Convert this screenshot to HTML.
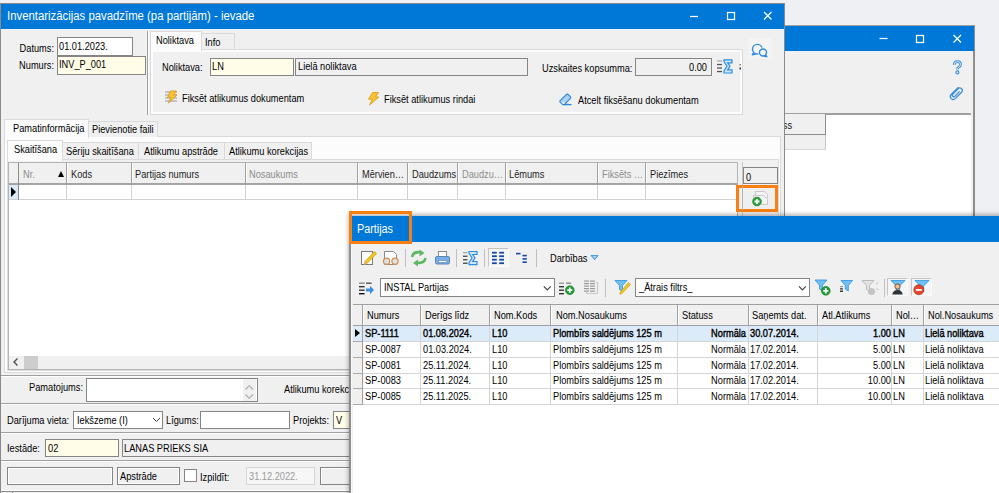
<!DOCTYPE html>
<html><head><meta charset="utf-8">
<style>
*{box-sizing:border-box;margin:0;padding:0}
html,body{width:999px;height:493px;overflow:hidden;background:#eef0f4;font-family:"Liberation Sans",sans-serif;font-size:11px;color:#000}
.a{position:absolute}
.t{position:absolute;white-space:nowrap;font-size:11px;line-height:13px;transform:scaleX(.84);transform-origin:0 0;color:#000}
.tr{position:absolute;white-space:nowrap;font-size:11px;line-height:13px;transform:scaleX(.84);transform-origin:100% 0;text-align:right;color:#000}
.blue{background:#0078d7}
.ttl{position:absolute;white-space:nowrap;color:#fff;font-size:12px;line-height:14px;transform-origin:0 0}
.inp{position:absolute;background:#fff;border:1px solid #858585}
.inpy{background:#fffde8}
.g{position:absolute;background:#a0a0a0}
</style></head><body>

<!-- back window -->
<div class="a" style="left:700px;top:25px;width:275px;height:470px;background:#f0f0f0;border-top:1px solid #a8a09a;border-right:2px solid #8e8e8e"></div>
<div class="a blue" style="left:700px;top:26px;width:274px;height:25px"></div>
<div class="a" style="left:700px;top:113px;width:271px;height:2px;background:#a0a0a0"></div>
<div class="a" style="left:700px;top:115px;width:271px;height:380px;background:#fff"></div>
<div class="a" style="left:701px;top:114px;width:125px;height:21px;background:#f0f0f0;border-right:1px solid #8c8c8c;border-bottom:1px solid #8c8c8c"></div>
<div class="tr" style="left:700px;width:92px;top:119px;color:#111">ss</div>
<div class="a" style="left:701px;top:135px;width:125px;height:15px;background:#f0f0f0;border-right:1px solid #c8c8c8;border-bottom:1px solid #d8d8d8"></div>
<!-- main window -->
<div id="mw" class="a" style="left:0;top:3px;width:785px;height:490px;background:#f0f0f0;border:1px solid #8a8a8a;border-bottom:none"></div>
<div class="a blue" style="left:1px;top:4px;width:783px;height:25px"></div>
<div class="ttl" style="left:7px;top:9px;transform:scaleX(.946)">Inventarizācijas pavadzīme (pa partijām) - ievade</div>


<!-- main content: header -->
<div class="tr" style="left:0;width:54px;top:42px">Datums:</div>
<div class="tr" style="left:0;width:54px;top:59px">Numurs:</div>
<div class="inp" style="left:57px;top:37px;width:76px;height:19px"></div>
<div class="t" style="left:59px;top:40px">01.01.2023.</div>
<div class="inp inpy" style="left:57px;top:56px;width:89px;height:19px"></div>
<div class="t" style="left:59px;top:58px">INV_P_001</div>
<div class="a" style="left:147px;top:31px;width:1px;height:84px;background:#a0a0a0"></div>
<div class="a" style="left:148px;top:31px;width:1px;height:84px;background:#fff"></div>

<!-- noliktava tabs -->
<div class="a" style="left:150px;top:49px;width:593px;height:66px;background:#fcfcfc;border:1px solid #dadada"></div>
<div class="a" style="left:153px;top:52px;width:587px;height:60px;background:#f0f0f0"></div>
<div class="a" style="left:150px;top:31px;width:52px;height:20px;background:#fcfcfc;border:1px solid #dadada;border-bottom:none"></div>
<div class="a" style="left:201px;top:33px;width:34px;height:16px;background:#f0f0f0;border:1px solid #dadada;border-bottom:none"></div>
<div class="t" style="left:156px;top:34px">Noliktava</div>
<div class="t" style="left:205px;top:36px">Info</div>
<div class="t" style="left:162px;top:61px">Noliktava:</div>
<div class="inp inpy" style="left:210px;top:58px;width:84px;height:18px"></div>
<div class="t" style="left:212px;top:60px">LN</div>
<div class="inp" style="left:295px;top:58px;width:233px;height:18px;background:#f0f0f0"></div>
<div class="t" style="left:298px;top:60px">Lielā noliktava</div>
<div class="t" style="left:542px;top:62px">Uzskaites kopsumma:</div>
<div class="inp" style="left:635px;top:58px;width:77px;height:18px;background:#f0f0f0"></div>
<div class="tr" style="left:640px;width:67px;top:61px">0.00</div>
<div class="t" style="left:182px;top:92px">Fiksēt atlikumus dokumentam</div>
<div class="t" style="left:384px;top:93px">Fiksēt atlikumus rindai</div>
<div class="t" style="left:578px;top:94px">Atcelt fiksēšanu dokumentam</div>

<!-- pamatinformacija tabs -->
<div class="a" style="left:4px;top:136px;width:777px;height:237px;background:#fcfcfc;border:1px solid #dadada"></div>
<div class="a" style="left:4px;top:119px;width:85px;height:19px;background:#fcfcfc;border:1px solid #dadada;border-bottom:none"></div>
<div class="a" style="left:88px;top:121px;width:70px;height:16px;background:#f0f0f0;border:1px solid #dadada;border-bottom:none"></div>
<div class="t" style="left:13px;top:122px">Pamatinformācija</div>
<div class="t" style="left:92px;top:123px">Pievienotie faili</div>
<div class="a" style="left:7px;top:159px;width:772px;height:212px;background:#fcfcfc;border:1px solid #dadada"></div>
<div class="a" style="left:8px;top:160px;width:770px;height:210px;background:#f0f0f0"></div>
<div class="a" style="left:7px;top:140px;width:56px;height:21px;background:#fcfcfc;border:1px solid #dadada;border-bottom:none"></div>
<div class="a" style="left:62px;top:142px;width:77px;height:17px;background:#f0f0f0;border:1px solid #dadada;border-bottom:none"></div>
<div class="a" style="left:138px;top:142px;width:87px;height:17px;background:#f0f0f0;border:1px solid #dadada;border-bottom:none"></div>
<div class="a" style="left:224px;top:142px;width:88px;height:17px;background:#f0f0f0;border:1px solid #dadada;border-bottom:none"></div>
<div class="t" style="left:14px;top:143px">Skaitīšana</div>
<div class="t" style="left:66px;top:145px">Sēriju skaitīšana</div>
<div class="t" style="left:144px;top:145px">Atlikumu apstrāde</div>
<div class="t" style="left:229px;top:145px">Atlikumu korekcijas</div>

<!-- grid -->
<div class="a" style="left:8px;top:162px;width:730px;height:208px;background:#fff;border:1px solid #b4b4b4"></div>
<div class="a" style="left:9px;top:163px;width:728px;height:20px;background:#f0f0f0"></div>
<div class="a" style="left:9px;top:183px;width:728px;height:2px;background:#a4a4a4"></div>
<div class="a" style="left:9px;top:199px;width:728px;height:1px;background:#d2d2d2"></div>
<div class="a" style="left:9px;top:185px;width:9px;height:14px;background:#d9ebf9"></div>
<div class="a" style="left:18px;top:163px;width:1px;height:37px;background:#8c8c8c"></div>
<div class="a" style="left:66px;top:163px;width:1px;height:20px;background:#a0a0a0"></div><div class="a" style="left:67px;top:163px;width:1px;height:20px;background:#fff"></div><div class="a" style="left:66px;top:185px;width:1px;height:14px;background:#d2d2d2"></div>
<div class="a" style="left:131px;top:163px;width:1px;height:20px;background:#a0a0a0"></div><div class="a" style="left:132px;top:163px;width:1px;height:20px;background:#fff"></div><div class="a" style="left:131px;top:185px;width:1px;height:14px;background:#d2d2d2"></div>
<div class="a" style="left:245px;top:163px;width:1px;height:20px;background:#a0a0a0"></div><div class="a" style="left:246px;top:163px;width:1px;height:20px;background:#fff"></div><div class="a" style="left:245px;top:185px;width:1px;height:14px;background:#d2d2d2"></div>
<div class="a" style="left:357px;top:163px;width:1px;height:20px;background:#a0a0a0"></div><div class="a" style="left:358px;top:163px;width:1px;height:20px;background:#fff"></div><div class="a" style="left:357px;top:185px;width:1px;height:14px;background:#d2d2d2"></div>
<div class="a" style="left:407px;top:163px;width:1px;height:20px;background:#a0a0a0"></div><div class="a" style="left:408px;top:163px;width:1px;height:20px;background:#fff"></div><div class="a" style="left:407px;top:185px;width:1px;height:14px;background:#d2d2d2"></div>
<div class="a" style="left:457px;top:163px;width:1px;height:20px;background:#a0a0a0"></div><div class="a" style="left:458px;top:163px;width:1px;height:20px;background:#fff"></div><div class="a" style="left:457px;top:185px;width:1px;height:14px;background:#d2d2d2"></div>
<div class="a" style="left:505px;top:163px;width:1px;height:20px;background:#a0a0a0"></div><div class="a" style="left:506px;top:163px;width:1px;height:20px;background:#fff"></div><div class="a" style="left:505px;top:185px;width:1px;height:14px;background:#d2d2d2"></div>
<div class="a" style="left:597px;top:163px;width:1px;height:20px;background:#a0a0a0"></div><div class="a" style="left:598px;top:163px;width:1px;height:20px;background:#fff"></div><div class="a" style="left:597px;top:185px;width:1px;height:14px;background:#d2d2d2"></div>
<div class="a" style="left:645px;top:163px;width:1px;height:20px;background:#a0a0a0"></div><div class="a" style="left:646px;top:163px;width:1px;height:20px;background:#fff"></div><div class="a" style="left:645px;top:185px;width:1px;height:14px;background:#d2d2d2"></div>
<div class="t" style="left:23px;top:168px;color:#8d8d8d">Nr.</div>
<div class="t" style="left:71px;top:168px;color:#1e1e1e">Kods</div>
<div class="t" style="left:135px;top:168px;color:#1e1e1e">Partijas numurs</div>
<div class="t" style="left:249px;top:168px;color:#8d8d8d">Nosaukums</div>
<div class="t" style="left:362px;top:168px;color:#1e1e1e">Mērvien…</div>
<div class="t" style="left:412px;top:168px;color:#1e1e1e">Daudzums</div>
<div class="t" style="left:462px;top:168px;color:#8d8d8d">Daudzu…</div>
<div class="t" style="left:509px;top:168px;color:#1e1e1e">Lēmums</div>
<div class="t" style="left:602px;top:168px;color:#8d8d8d">Fiksēts …</div>
<div class="t" style="left:650px;top:168px;color:#1e1e1e">Piezīmes</div>

<div class="a" style="left:57.8px;top:171px;width:0;height:0;border-left:3.3px solid transparent;border-right:3.3px solid transparent;border-bottom:6px solid #000"></div>
<div class="a" style="left:11px;top:187px;width:0;height:0;border-top:5px solid transparent;border-bottom:5px solid transparent;border-left:5px solid #000"></div>
<div class="a" style="left:9px;top:356px;width:728px;height:13px;background:#f0f0f0"></div>
<div class="a" style="left:24px;top:356px;width:14px;height:13px;background:#cdcdcd"></div>
<svg class="a" style="left:12px;top:357px" width="8" height="10"><path d="M5.5 1.5 L2 5 L5.5 8.5" fill="none" stroke="#505050" stroke-width="1.4"/></svg>
<div class="a" style="left:742px;top:162px;width:1px;height:208px;background:#c8c8c8"></div>
<div class="inp" style="left:743px;top:167px;width:35px;height:17px;background:#f0f0f0"></div>
<div class="t" style="left:746px;top:171px">0</div>
<div class="a" style="left:736px;top:185px;width:42px;height:27px;border:3px solid #fa7f12"></div>

<!-- lower form -->
<div class="a" style="left:1px;top:375px;width:783px;height:1px;background:#a0a0a0"></div>
<div class="a" style="left:1px;top:376px;width:783px;height:1px;background:#fff"></div>
<div class="tr" style="left:0;width:83px;top:381px">Pamatojums:</div>
<div class="inp" style="left:86px;top:378px;width:172px;height:24px"></div>
<div class="t" style="left:284px;top:383px">Atlikumu korekcijas:</div>
<div class="a" style="left:1px;top:403px;width:783px;height:1px;background:#a0a0a0"></div>
<div class="a" style="left:1px;top:404px;width:783px;height:1px;background:#fff"></div>
<div class="t" style="left:7px;top:414px">Darījuma vieta:</div>
<div class="inp" style="left:73px;top:411px;width:90px;height:18px"></div>
<div class="t" style="left:77px;top:414px">Iekšzeme (I)</div>
<div class="t" style="left:166px;top:414px">Līgums:</div>
<div class="inp" style="left:200px;top:411px;width:90px;height:18px"></div>
<div class="t" style="left:293px;top:414px">Projekts:</div>
<div class="inp inpy" style="left:333px;top:411px;width:40px;height:18px"></div>
<div class="t" style="left:336px;top:414px">V</div>
<div class="a" style="left:1px;top:432px;width:783px;height:1px;background:#a0a0a0"></div>
<div class="a" style="left:1px;top:433px;width:783px;height:1px;background:#fff"></div>
<div class="t" style="left:7px;top:442px">Iestāde:</div>
<div class="inp inpy" style="left:45px;top:439px;width:74px;height:18px"></div>
<div class="t" style="left:48px;top:442px">02</div>
<div class="inp" style="left:122px;top:439px;width:300px;height:18px;background:#f0f0f0"></div>
<div class="t" style="left:124px;top:442px">LANAS PRIEKS SIA</div>
<div class="a" style="left:1px;top:460px;width:783px;height:1px;background:#a0a0a0"></div>
<div class="a" style="left:1px;top:461px;width:783px;height:1px;background:#fff"></div>
<div class="inp" style="left:7px;top:467px;width:106px;height:18px;background:#f0f0f0;box-shadow:inset 1px 1px 0 #fff,inset -1px -1px 0 #fff"></div>
<div class="inp" style="left:117px;top:467px;width:63px;height:18px;background:#f0f0f0;box-shadow:inset 1px 1px 0 #fff,inset -1px -1px 0 #fff"></div>
<div class="t" style="left:120px;top:470px">Apstrāde</div>
<div class="inp" style="left:184px;top:469px;width:13px;height:13px"></div>
<div class="t" style="left:200px;top:471px">Izpildīt:</div>
<div class="a" style="left:246px;top:467px;width:69px;height:18px;background:#f7f7f7;border:1px solid #d5d5d5"></div>
<div class="t" style="left:249px;top:470px;color:#9a9a9a">31.12.2022.</div>
<div class="inp" style="left:320px;top:467px;width:60px;height:18px;background:#f0f0f0;box-shadow:inset 1px 1px 0 #fff"></div>
<div class="a" style="left:1px;top:490px;width:783px;height:1px;background:#fff"></div><div class="a" style="left:1px;top:491px;width:783px;height:1px;background:#8a8a8a"></div><div class="a" style="left:12px;top:491px;width:1px;height:2px;background:#8a8a8a"></div>


<svg class="a" style="left:0;top:0" width="999" height="493" viewBox="0 0 999 493">
<!-- main title buttons -->
<g stroke="#fff" stroke-width="1.25" fill="none">
<line x1="690" y1="16.5" x2="698" y2="16.5"/>
<rect x="727.5" y="12.5" width="7" height="7"/>
<path d="M764 12 L771.5 19.5 M771.5 12 L764 19.5"/>
<line x1="879.5" y1="38.5" x2="887.5" y2="38.5"/>
<rect x="916.5" y="35.5" width="7" height="7"/>
<path d="M953.5 35 L961 42.5 M961 35 L953.5 42.5"/>
</g>
<!-- chat icon -->
<rect x="749" y="38" width="22" height="21" fill="#f4f4f4"/>
<g stroke="#2b8de0" stroke-width="1.4" fill="none">
<circle cx="757.3" cy="49.2" r="4.8"/>
<path d="M754 52.8 L752.3 54.8 L755.6 54" stroke-linejoin="round"/>
</g>
<circle cx="763" cy="52.5" r="4.9" fill="#f4f4f4"/>
<g stroke="#2b8de0" stroke-width="1.4" fill="none">
<circle cx="763" cy="52.5" r="3.5"/>
<path d="M765.3 55 L766.8 56.5 L764 56.2" stroke-linejoin="round"/>
</g>
<!-- sigma main -->
<g fill="#555"><rect x="717" y="60.3" width="5" height="1.3" fill="#aaa"/><rect x="717" y="63.9" width="5" height="1.3"/><rect x="717" y="67.4" width="5" height="1.3"/><rect x="717" y="70.9" width="5" height="1.3"/></g>
<path d="M724 59.8 H732 V62.8 H727.7 L730 66.3 L727.7 69.8 H732 V73 H724 V71 L727 66.3 L724 61.6 Z" fill="#cfe4f8" stroke="#2b8de0" stroke-width="1.2"/>
<rect x="739.5" y="64" width="1.5" height="1.5" fill="#a07050"/><rect x="739.5" y="67.5" width="1.5" height="2" fill="#303030"/>
<!-- fikset doc icon -->
<g fill="#c4c4c4"><rect x="165" y="91" width="12" height="2"/><rect x="165" y="94" width="12" height="2"/><rect x="165" y="97" width="12" height="2"/><rect x="165" y="100" width="12" height="2"/></g>
<path d="M170.5 91 L176.5 91 L173.5 95 L177 95 L168.5 103 L171 97.3 L167.5 97.3 Z" fill="#f7c534" stroke="#e39a1c" stroke-width="0.9"/>
<path d="M372.5 92.5 L378.5 92.5 L375.5 97 L379 97 L369.5 105 L372.3 99.2 L368.5 99.2 Z" fill="#f7c534" stroke="#e39a1c" stroke-width="0.9"/>
<!-- eraser -->
<path d="M559.5 101.3 L566 94.8 Q567.3 93.5 568.6 94.8 L570.2 96.4 Q571.3 97.6 570.2 98.7 L564.3 104.6 H571.5" fill="#a9d2f5" stroke="#2f86d8" stroke-width="1.2" stroke-linejoin="round"/>
<path d="M559.5 101.3 L562.8 104.6 H565" fill="none" stroke="#2f86d8" stroke-width="1.2"/>
<!-- orange box add icon -->
<rect x="739" y="188" width="36" height="21" fill="#efefef"/>
<line x1="742.5" y1="186" x2="742.5" y2="210" stroke="#b8b8b8"/>
<g fill="#f4f4f4" stroke="#c9c9c9" stroke-width="1">
<path d="M755.5 191.5 H764.5 L767.5 194.5 V198 H755.5 Z"/>
<path d="M753.5 195.5 H763.5 L767.5 199.5 V204.5 H753.5 Z"/>
</g>
<circle cx="757" cy="201.5" r="4.3" fill="#27a33a" stroke="#1b7a2a" stroke-width="0.8"/>
<path d="M757 199 V204 M754.5 201.5 H759.5" stroke="#fff" stroke-width="1.8"/>
<!-- back window icons -->
<path d="M954.2 65 Q954.2 61.6 957.3 61.6 Q960.6 61.6 960.6 64.4 Q960.6 66.2 958.6 67.2 Q957.4 67.9 957.4 69.6" fill="none" stroke="#3d8fd9" stroke-width="2.6"/>
<path d="M954.2 65 Q954.2 61.6 957.3 61.6 Q960.6 61.6 960.6 64.4 Q960.6 66.2 958.6 67.2 Q957.4 67.9 957.4 69.6" fill="none" stroke="#dcecfa" stroke-width="0.9"/>
<circle cx="957.4" cy="72.4" r="1.5" fill="#dcecfa" stroke="#3d8fd9" stroke-width="1.1"/>
<path d="M958.5 87.2 L951.4 94.3 Q949.2 96.6 951.2 98.6 Q953.3 100.6 955.5 98.4 L961.6 92.2 Q963.2 90.4 961.6 88.7 Q959.9 87.1 958.1 88.7 L952.9 94 Q951.9 95.3 952.8 96.3 Q953.8 97.2 954.9 96.2 L959.6 91.4" fill="none" stroke="#3d8fd9" stroke-width="1.3"/>
<!-- combobox chevrons main -->
<path d="M153 418 L156.5 421.5 L160 418" fill="none" stroke="#404040" stroke-width="1"/>
<rect x="243" y="379" width="13" height="22" fill="#f0f0f0"/><path d="M245.5 389.5 L249.3 385.7 L253 389.5 M245.5 394.5 L249.3 398.3 L253 394.5" fill="none" stroke="#a8a8a8" stroke-width="1.1"/>
</svg>

<!-- partijas window -->
<div id="pw" class="a" style="left:349px;top:216px;width:660px;height:290px;background:#f0f0f0;border-left:2px solid #8e8e8e;box-shadow:-1px -2px 4px rgba(0,0,0,.28)"></div>
<div class="a" style="left:351px;top:242px;width:1px;height:260px;background:#fafafa"></div>
<div class="a blue" style="left:351px;top:216px;width:648px;height:26px"></div>
<div class="ttl" style="left:357px;top:222px;transform:scaleX(.9)">Partijas</div>


<!-- partijas toolbar -->
<div class="a" style="left:405px;top:249px;width:1px;height:18px;background:#c0c0c0"></div>
<div class="a" style="left:456px;top:249px;width:1px;height:18px;background:#c0c0c0"></div>
<div class="a" style="left:484px;top:249px;width:1px;height:18px;background:#c0c0c0"></div>
<div class="a" style="left:488px;top:248px;width:21px;height:19px;background:#f5f5f5;border:1px solid #fbfbfb;border-left-color:#c4c4c4;border-top-color:#c4c4c4"></div>
<div class="a" style="left:536px;top:249px;width:1px;height:18px;background:#c0c0c0"></div>
<div class="t" style="left:550px;top:252px">Darbības</div>
<svg class="a" style="left:589px;top:253px" width="12" height="9"><path d="M2.2 2.5 H9 L5.6 6.5 Z" fill="#a9d1f6" stroke="#4d9be6" stroke-width="1.1" stroke-linejoin="round"/></svg>
<div class="inp" style="left:380px;top:278px;width:175px;height:19px"></div>
<div class="t" style="left:384px;top:281px">INSTAL Partijas</div>
<div class="a" style="left:605px;top:279px;width:1px;height:18px;background:#c0c0c0"></div>
<div class="inp" style="left:635px;top:278px;width:175px;height:19px"></div>
<div class="t" style="left:639px;top:281px">_Ātrais filtrs_</div>
<div class="a" style="left:884px;top:279px;width:1px;height:18px;background:#c0c0c0"></div>
<div class="a" style="left:887px;top:278px;width:21px;height:18px;background:#f5f5f5;border:1px solid #fbfbfb;border-left-color:#c4c4c4;border-top-color:#c4c4c4"></div>
<div class="a" style="left:911px;top:278px;width:21px;height:18px;background:#f5f5f5;border:1px solid #fbfbfb;border-left-color:#c4c4c4;border-top-color:#c4c4c4"></div>

<!-- partijas grid -->
<div class="a" style="left:353px;top:304px;width:646px;height:189px;background:#fff;border-top:1px solid #a0a0a0"></div>
<div class="a" style="left:353px;top:305px;width:646px;height:20px;background:#f0f0f0"></div>
<div class="a" style="left:353px;top:326px;width:10px;height:78px;background:#f0f0f0"></div>
<div class="a" style="left:353px;top:326px;width:10px;height:15px;background:#dcebfa"></div>
<div class="a" style="left:363px;top:326px;width:636px;height:15px;background:#dcebfa"></div>
<div class="a" style="left:353px;top:325px;width:646px;height:1px;background:#a0a0a0"></div>
<div class="a" style="left:363px;top:341px;width:636px;height:1px;background:#d5d5d5"></div><div class="a" style="left:353px;top:341px;width:10px;height:1px;background:#a8a8a8"></div>
<div class="a" style="left:363px;top:357px;width:636px;height:1px;background:#d5d5d5"></div><div class="a" style="left:353px;top:357px;width:10px;height:1px;background:#a8a8a8"></div>
<div class="a" style="left:363px;top:373px;width:636px;height:1px;background:#d5d5d5"></div><div class="a" style="left:353px;top:373px;width:10px;height:1px;background:#a8a8a8"></div>
<div class="a" style="left:363px;top:388px;width:636px;height:1px;background:#d5d5d5"></div><div class="a" style="left:353px;top:388px;width:10px;height:1px;background:#a8a8a8"></div>
<div class="a" style="left:363px;top:404px;width:636px;height:1px;background:#d5d5d5"></div><div class="a" style="left:353px;top:404px;width:10px;height:1px;background:#a8a8a8"></div>
<div class="a" style="left:362px;top:305px;width:1px;height:99px;background:#a0a0a0"></div><div class="a" style="left:363px;top:305px;width:1px;height:20px;background:#fff"></div>
<div class="a" style="left:420px;top:305px;width:1px;height:20px;background:#a0a0a0"></div><div class="a" style="left:421px;top:305px;width:1px;height:20px;background:#fff"></div><div class="a" style="left:420px;top:326px;width:1px;height:78px;background:#d5d5d5"></div>
<div class="a" style="left:489px;top:305px;width:1px;height:20px;background:#a0a0a0"></div><div class="a" style="left:490px;top:305px;width:1px;height:20px;background:#fff"></div><div class="a" style="left:489px;top:326px;width:1px;height:78px;background:#d5d5d5"></div>
<div class="a" style="left:550px;top:305px;width:1px;height:20px;background:#a0a0a0"></div><div class="a" style="left:551px;top:305px;width:1px;height:20px;background:#fff"></div><div class="a" style="left:550px;top:326px;width:1px;height:78px;background:#d5d5d5"></div>
<div class="a" style="left:677px;top:305px;width:1px;height:20px;background:#a0a0a0"></div><div class="a" style="left:678px;top:305px;width:1px;height:20px;background:#fff"></div><div class="a" style="left:677px;top:326px;width:1px;height:78px;background:#d5d5d5"></div>
<div class="a" style="left:748px;top:305px;width:1px;height:20px;background:#a0a0a0"></div><div class="a" style="left:749px;top:305px;width:1px;height:20px;background:#fff"></div><div class="a" style="left:748px;top:326px;width:1px;height:78px;background:#d5d5d5"></div>
<div class="a" style="left:817px;top:305px;width:1px;height:20px;background:#a0a0a0"></div><div class="a" style="left:818px;top:305px;width:1px;height:20px;background:#fff"></div><div class="a" style="left:817px;top:326px;width:1px;height:78px;background:#d5d5d5"></div>
<div class="a" style="left:891px;top:305px;width:1px;height:20px;background:#a0a0a0"></div><div class="a" style="left:892px;top:305px;width:1px;height:20px;background:#fff"></div><div class="a" style="left:891px;top:326px;width:1px;height:78px;background:#d5d5d5"></div>
<div class="a" style="left:923px;top:305px;width:1px;height:20px;background:#a0a0a0"></div><div class="a" style="left:924px;top:305px;width:1px;height:20px;background:#fff"></div><div class="a" style="left:923px;top:326px;width:1px;height:78px;background:#d5d5d5"></div>
<div class="t" style="left:367px;top:309px">Numurs</div>
<div class="t" style="left:425px;top:309px">Derīgs līdz</div>
<div class="t" style="left:494px;top:309px">Nom.Kods</div>
<div class="t" style="left:556px;top:309px">Nom.Nosaukums</div>
<div class="t" style="left:682px;top:309px">Statuss</div>
<div class="t" style="left:752px;top:309px">Saņemts dat.</div>
<div class="t" style="left:822px;top:309px">Atl.Atlikums</div>
<div class="t" style="left:896px;top:309px">Nol…</div>
<div class="t" style="left:928px;top:309px">Nol.Nosaukums</div>
<div class="t" style="left:365px;top:327px;-webkit-text-stroke:.4px #000;">SP-1111</div>
<div class="t" style="left:423px;top:327px;-webkit-text-stroke:.4px #000;">01.08.2024.</div>
<div class="t" style="left:492px;top:327px;-webkit-text-stroke:.4px #000;">L10</div>
<div class="t" style="left:553px;top:327px;-webkit-text-stroke:.4px #000;">Plombīrs saldējums 125 m</div>
<div class="tr" style="left:645px;width:101px;top:327px;-webkit-text-stroke:.4px #000;">Normāla</div>
<div class="t" style="left:750px;top:327px;-webkit-text-stroke:.4px #000;">30.07.2014.</div>
<div class="tr" style="left:820px;width:71px;top:327px;-webkit-text-stroke:.4px #000;">1.00</div>
<div class="t" style="left:893px;top:327px;-webkit-text-stroke:.4px #000;">LN</div>
<div class="t" style="left:925px;top:327px;-webkit-text-stroke:.4px #000;">Lielā noliktava</div>
<div class="t" style="left:365px;top:343px;">SP-0087</div>
<div class="t" style="left:423px;top:343px;">01.03.2024.</div>
<div class="t" style="left:492px;top:343px;">L10</div>
<div class="t" style="left:553px;top:343px;">Plombīrs saldējums 125 m</div>
<div class="tr" style="left:645px;width:101px;top:343px;">Normāla</div>
<div class="t" style="left:750px;top:343px;">17.02.2014.</div>
<div class="tr" style="left:820px;width:71px;top:343px;">5.00</div>
<div class="t" style="left:893px;top:343px;">LN</div>
<div class="t" style="left:925px;top:343px;">Lielā noliktava</div>
<div class="t" style="left:365px;top:359px;">SP-0081</div>
<div class="t" style="left:423px;top:359px;">25.11.2024.</div>
<div class="t" style="left:492px;top:359px;">L10</div>
<div class="t" style="left:553px;top:359px;">Plombīrs saldējums 125 m</div>
<div class="tr" style="left:645px;width:101px;top:359px;">Normāla</div>
<div class="t" style="left:750px;top:359px;">17.02.2014.</div>
<div class="tr" style="left:820px;width:71px;top:359px;">5.00</div>
<div class="t" style="left:893px;top:359px;">LN</div>
<div class="t" style="left:925px;top:359px;">Lielā noliktava</div>
<div class="t" style="left:365px;top:374px;">SP-0083</div>
<div class="t" style="left:423px;top:374px;">25.11.2024.</div>
<div class="t" style="left:492px;top:374px;">L10</div>
<div class="t" style="left:553px;top:374px;">Plombīrs saldējums 125 m</div>
<div class="tr" style="left:645px;width:101px;top:374px;">Normāla</div>
<div class="t" style="left:750px;top:374px;">17.02.2014.</div>
<div class="tr" style="left:820px;width:71px;top:374px;">10.00</div>
<div class="t" style="left:893px;top:374px;">LN</div>
<div class="t" style="left:925px;top:374px;">Lielā noliktava</div>
<div class="t" style="left:365px;top:390px;">SP-0085</div>
<div class="t" style="left:423px;top:390px;">25.11.2025.</div>
<div class="t" style="left:492px;top:390px;">L10</div>
<div class="t" style="left:553px;top:390px;">Plombīrs saldējums 125 m</div>
<div class="tr" style="left:645px;width:101px;top:390px;">Normāla</div>
<div class="t" style="left:750px;top:390px;">17.02.2014.</div>
<div class="tr" style="left:820px;width:71px;top:390px;">10.00</div>
<div class="t" style="left:893px;top:390px;">LN</div>
<div class="t" style="left:925px;top:390px;">Lielā noliktava</div>
<div class="a" style="left:355px;top:329px;width:0;height:0;border-top:4.5px solid transparent;border-bottom:4.5px solid transparent;border-left:5px solid #000"></div>
<div class="a" style="left:349px;top:211px;width:63px;height:33px;border:3px solid #fa7f12"></div>


<svg class="a" style="left:0;top:0" width="999" height="493" viewBox="0 0 999 493">
<!-- pencil doc -->
<rect x="361.5" y="251.5" width="11" height="13" fill="#fff" stroke="#7a7a7a"/>
<path d="M374.5 251.5 L376.5 253.5 L367 263.5 L364.5 264.5 L365 261.5 Z" fill="#f5c518" stroke="#c89a10" stroke-width="0.7"/>
<path d="M365 261.5 L364.5 264.5 L367 263.5 Z" fill="#d9a87a"/>
<!-- glasses doc -->
<path d="M384.5 260 V251.5 H393.5 L396.5 254.5 V260" fill="#fff" stroke="#8a8a8a"/>
<rect x="384.5" y="260" width="12" height="4.5" fill="#fff"/>
<line x1="384.5" y1="264.5" x2="396.5" y2="264.5" stroke="#8a8a8a"/>
<circle cx="386.6" cy="261.3" r="3.1" fill="#d8e3ea" stroke="#d98a4a" stroke-width="1.2"/>
<circle cx="395" cy="261.3" r="3.1" fill="#d8e3ea" stroke="#d98a4a" stroke-width="1.2"/>
<!-- refresh -->
<path d="M412 257 Q413 251.8 419 252.2 L420.5 252.3" fill="none" stroke="#5cb860" stroke-width="2.6"/>
<path d="M419.5 249.5 L424.5 253 L419.5 256.5 Z" fill="#5cb860"/>
<path d="M425.5 258 Q424.5 263.2 418.5 262.8 L417 262.7" fill="none" stroke="#5cb860" stroke-width="2.6"/>
<path d="M418 259.5 L413 263 L418 266.5 Z" fill="#5cb860"/>
<!-- printer -->
<rect x="438.5" y="251.5" width="8" height="6" fill="#fff" stroke="#8a8a8a"/>
<rect x="435.5" y="256.5" width="14" height="7.5" rx="1.5" fill="#78aee6" stroke="#5a86b4"/>
<rect x="438.5" y="260.5" width="8" height="2" fill="#fff" stroke="#5a86b4" stroke-width="0.6"/>
<!-- sigma -->
<g fill="#444"><rect x="463" y="252" width="4.5" height="1.3" fill="#aaa"/><rect x="463" y="255.6" width="4.5" height="1.3"/><rect x="463" y="259.1" width="4.5" height="1.3"/><rect x="463" y="262.6" width="4.5" height="1.3"/></g>
<path d="M469 251.5 H477 V254.5 H472.7 L475 258 L472.7 261.5 H477 V264.7 H469 V262.7 L472 258 L469 253.3 Z" fill="#cfe4f8" stroke="#2b8de0" stroke-width="1.2"/>
<!-- list icon (pressed) -->
<g fill="#1446b0">
<rect x="492" y="251.8" width="4.8" height="1.8"/><rect x="499.2" y="251.8" width="4.8" height="1.8"/>
<rect x="492" y="255.3" width="4.8" height="1.8"/><rect x="499.2" y="255.3" width="4.8" height="1.8"/>
<rect x="492" y="258.8" width="4.8" height="1.8"/><rect x="499.2" y="258.8" width="4.8" height="1.8"/>
<rect x="492" y="262.3" width="4.8" height="1.8"/><rect x="499.2" y="262.3" width="4.8" height="1.8"/>
<!-- tree -->
<rect x="516" y="252.8" width="4.5" height="1.6"/>
<rect x="522.5" y="254.8" width="4.3" height="1.6"/><rect x="522.5" y="258.1" width="4.3" height="1.6"/><rect x="522.5" y="261.4" width="4.3" height="1.6"/>
</g>
<!-- row2: list arrow -->
<g fill="#333"><rect x="359" y="282.5" width="5.6" height="1.4" fill="#8a8a8a"/><rect x="366" y="282.5" width="5.6" height="1.4" fill="#555"/><rect x="359" y="286" width="5.6" height="1.4"/><rect x="359" y="289.5" width="5.6" height="1.4"/><rect x="359" y="293" width="5.6" height="1.4" fill="#111"/></g>
<path d="M366 288.5 H370 V285.8 L374 290 L370 294.2 V291.5 H366 Z" fill="#3b8ee0"/>
<!-- combo chevron -->
<path d="M543.8 286.3 L547.3 289.8 L550.8 286.3" fill="none" stroke="#444" stroke-width="1.2"/>
<path d="M799 286.3 L802.4 289.8 L805.8 286.3" fill="none" stroke="#444" stroke-width="1.2"/>
<!-- list plus -->
<g fill="#333"><rect x="559" y="282.5" width="5" height="1.4" fill="#999"/><rect x="566" y="282.5" width="5" height="1.4" fill="#888"/><rect x="559" y="286" width="5" height="1.4"/><rect x="559" y="289.5" width="5" height="1.4"/><rect x="559" y="293" width="5" height="1.4"/></g>
<circle cx="569.8" cy="290.2" r="4.4" fill="#1f9a34" stroke="#137a26" stroke-width="0.6"/>
<path d="M569.8 287.6 V292.8 M567.2 290.2 H572.4" stroke="#fff" stroke-width="1.8"/>
<!-- columns icon -->
<rect x="586.5" y="282.5" width="11" height="11" fill="none" stroke="#c8c8c8"/>
<rect x="584" y="280" width="12" height="12" fill="#f0f0f0"/>
<g fill="#9a9a9a"><rect x="584" y="280.5" width="5" height="1.2"/><rect x="590" y="280.5" width="5" height="1.2"/><rect x="584" y="283" width="5" height="1.2"/><rect x="590" y="283" width="5" height="1.2"/><rect x="584" y="285.5" width="5" height="1.2"/><rect x="590" y="285.5" width="5" height="1.2"/><rect x="584" y="288" width="5" height="1.2"/><rect x="590" y="288" width="5" height="1.2"/><rect x="584" y="290.5" width="5" height="1.2"/><rect x="590" y="290.5" width="5" height="1.2"/></g>
<!-- filter edit -->
<path d="M615 280.5 H627 L622.5 285.5 V291.5 L619.5 289.5 V285.5 Z" fill="#6ec0f5" stroke="#2d8fdc" stroke-width="0.8"/>
<path d="M628.5 282.5 L630.5 284.5 L622 293.5 L619.8 294.3 L620.3 292 Z" fill="#f2c51c" stroke="#c89a10" stroke-width="0.6"/>
<!-- filter plus -->
<path d="M815 280 H827 L822.5 285.2 V291 L819.5 289 V285.2 Z" fill="#6ec0f5" stroke="#2d8fdc" stroke-width="0.8"/>
<circle cx="825.8" cy="290.8" r="4.4" fill="#1f9a34" stroke="#137a26" stroke-width="0.6"/>
<path d="M825.8 288.2 V293.4 M823.2 290.8 H828.4" stroke="#fff" stroke-width="1.8"/>
<!-- filter2 -->
<g fill="#333"><rect x="840" y="286" width="3" height="1.2" fill="#999"/><rect x="840" y="288.3" width="3" height="1.2"/><rect x="840" y="290.6" width="3" height="1.2" fill="#111"/></g>
<path d="M841 280.5 H852.5 L848.3 285.5 V291 L845.3 289 V285.5 Z" fill="#6ec0f5" stroke="#2d8fdc" stroke-width="0.8"/>
<!-- grey filter -->
<path d="M862 280.5 H874 L869.5 285.5 V291.5 L866.5 289.5 V285.5 Z" fill="#e2e2e2" stroke="#b0b0b0" stroke-width="0.8"/>
<circle cx="871.5" cy="291.5" r="3.5" fill="#c4c4c4"/>
<path d="M876 284 L878 282.5 M876.5 289 L878.3 289.5" stroke="#aaa" stroke-width="0.8"/>
<!-- person filter -->
<path d="M891 280.5 H905 L899.6 286 V292 L896.4 290 V286 Z" fill="#6ec0f5" stroke="#2d8fdc" stroke-width="0.8"/>
<circle cx="897.5" cy="286.5" r="2.6" fill="#f0c090" stroke="#6b3a1a" stroke-width="0.8"/>
<path d="M892.3 294.5 Q893 290 897.5 290 Q902 290 902.7 294.5 Z" fill="#333"/>
<!-- minus filter -->
<path d="M915 280.5 H929 L923.6 286 V292 L920.4 290 V286 Z" fill="#6ec0f5" stroke="#2d8fdc" stroke-width="0.8"/>
<circle cx="918.8" cy="289.8" r="5" fill="#e2462c" stroke="#b03018" stroke-width="0.7"/>
<rect x="915.8" y="289" width="6" height="1.8" fill="#fff"/>
</svg>

</body></html>
